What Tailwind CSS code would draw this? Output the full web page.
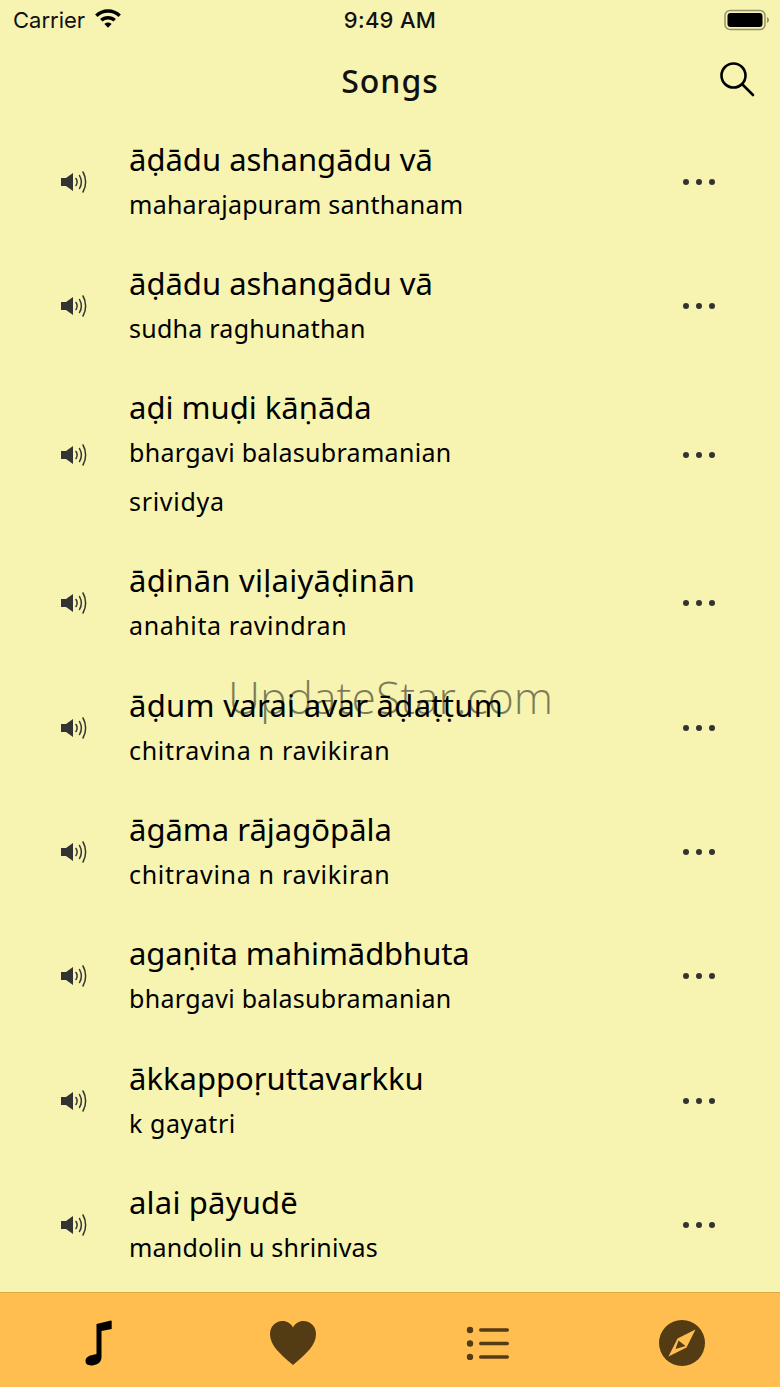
<!DOCTYPE html>
<html lang="en">
  <head>
    <meta charset="UTF-8">
    <meta name="viewport" content="width=device-width, initial-scale=1.0">
    <title>Songs</title>
    <script src="https://cdn.jsdelivr.net/npm/@tailwindcss/browser@4"></script>
  </head>

  <body class="bg-[#f6f4b0]">
    <div class="relative w-[780px] h-[1387px] overflow-hidden flex flex-col bg-[#f6f4b0] text-black font-['Noto_Sans',sans-serif]">

      <!-- status bar -->
      <div class="h-[40px] shrink-0 grid grid-cols-3 items-center px-[13px] font-['Inter',sans-serif]">
        <div class="flex items-center gap-[9px]">
          <span class="text-[22px] text-[#111]">Carrier</span>
          <svg class="w-[28px] h-[21px] -mt-[3px]" viewBox="0 0 30 22"><path d="M15 1C9.600 1 4.800 3.100 1.200 6.600L3.800 9.300C6.700 6.500 10.600 4.800 15 4.800s8.300 1.700 11.200 4.500l2.600-2.700C25.200 3.100 20.400 1 15 1z"/><path d="M15 8.200c-3.300 0-6.300 1.300-8.500 3.400l2.700 2.700c1.500-1.400 3.500-2.300 5.800-2.300s4.300.9 5.800 2.300l2.700-2.700C21.300 9.500 18.300 8.200 15 8.200z"/><path d="M15 15.400c-1.500 0-2.800.6-3.800 1.500l3.800 4 3.800-4c-1-.9-2.300-1.500-3.800-1.500z"/></svg>
        </div>
        <div class="text-center text-[22px] font-medium tracking-[0.3px] text-[#111]">9:49 AM</div>
        <div class="flex justify-end -mr-[3px]">
          <svg class="w-[46px] h-[22px]" viewBox="0 0 46 22"><rect x="1" y="1.500" width="40" height="19" rx="5" fill="none" stroke="#000" stroke-opacity=".4" stroke-width="1.500"/><rect x="3.500" y="4" width="35" height="14" rx="3"/><path d="M43 8v6c1.200-.4 2-1.700 2-3s-.8-2.600-2-3z" fill="#000" fill-opacity=".4"/></svg>
        </div>
      </div>

      <!-- nav bar -->
      <div class="relative h-[79.4px] shrink-0 flex items-center justify-center">
        <h1 class="text-[32px] font-medium tracking-[1px] text-[#111] mt-[2px]">Songs</h1>
        <svg class="absolute right-[25px] top-[21px] w-[36px] h-[36px]" viewBox="0 0 36 36" fill="none" stroke="#000" stroke-width="2.600" stroke-linecap="round"><circle cx="14.500" cy="14.500" r="12"/><path d="M23.500 23.500L34 34"/></svg>
      </div>

      <!-- song rows -->
      <div class="flex-1">
        <div class="flex items-center h-[124.3px]">
          <div class="w-[129px] shrink-0 flex justify-center pl-[19px]"><svg class="w-[28px] h-[26px]" viewBox="0 0 28 26"><path d="M1 9h5l7-5v18l-7-5H1z" fill="#333"/><g fill="none" stroke="#333" stroke-width="1.500" stroke-linecap="round"><path d="M16 9.500c1.300 2 1.300 5 0 7"/><path d="M19.500 6.500c2.300 4 2.300 9 0 13"/><path d="M23 3c3.500 6 3.500 14 0 20"/></g></svg></div>
          <div class="flex-1"><div class="text-[31px] leading-[45px]">āḍādu ashangādu vā</div><div class="text-[25px] leading-[45px] tracking-[0.25px]">maharajapuram santhanam</div></div>
          <div class="w-[100px] flex justify-center gap-[7px] pr-[62px]"><i class="w-[6px] h-[6px] rounded-full bg-[#333]"></i><i class="w-[6px] h-[6px] rounded-full bg-[#333]"></i><i class="w-[6px] h-[6px] rounded-full bg-[#333]"></i></div>
        </div>
        <div class="flex items-center h-[124.3px]">
          <div class="w-[129px] shrink-0 flex justify-center pl-[19px]"><svg class="w-[28px] h-[26px]" viewBox="0 0 28 26"><path d="M1 9h5l7-5v18l-7-5H1z" fill="#333"/><g fill="none" stroke="#333" stroke-width="1.500" stroke-linecap="round"><path d="M16 9.500c1.300 2 1.300 5 0 7"/><path d="M19.500 6.500c2.300 4 2.300 9 0 13"/><path d="M23 3c3.500 6 3.500 14 0 20"/></g></svg></div>
          <div class="flex-1"><div class="text-[31px] leading-[45px]">āḍādu ashangādu vā</div><div class="text-[25px] leading-[45px] tracking-[0.25px]">sudha raghunathan</div></div>
          <div class="w-[100px] flex justify-center gap-[7px] pr-[62px]"><i class="w-[6px] h-[6px] rounded-full bg-[#333]"></i><i class="w-[6px] h-[6px] rounded-full bg-[#333]"></i><i class="w-[6px] h-[6px] rounded-full bg-[#333]"></i></div>
        </div>
        <div class="flex items-center h-[173.3px]">
          <div class="w-[129px] shrink-0 flex justify-center pl-[19px]"><svg class="w-[28px] h-[26px]" viewBox="0 0 28 26"><path d="M1 9h5l7-5v18l-7-5H1z" fill="#333"/><g fill="none" stroke="#333" stroke-width="1.500" stroke-linecap="round"><path d="M16 9.500c1.300 2 1.300 5 0 7"/><path d="M19.500 6.500c2.300 4 2.300 9 0 13"/><path d="M23 3c3.500 6 3.500 14 0 20"/></g></svg></div>
          <div class="flex-1 pt-[3px]"><div class="text-[31px] leading-[45px]">aḍi muḍi kāṇāda</div><div class="text-[25px] leading-[45px] tracking-[0.3px]">bhargavi balasubramanian</div><div class="text-[25px] leading-[53px] tracking-[0.7px]">srividya</div></div>
          <div class="w-[100px] flex justify-center gap-[7px] pr-[62px]"><i class="w-[6px] h-[6px] rounded-full bg-[#333]"></i><i class="w-[6px] h-[6px] rounded-full bg-[#333]"></i><i class="w-[6px] h-[6px] rounded-full bg-[#333]"></i></div>
        </div>
        <div class="flex items-center h-[124.3px]">
          <div class="w-[129px] shrink-0 flex justify-center pl-[19px]"><svg class="w-[28px] h-[26px]" viewBox="0 0 28 26"><path d="M1 9h5l7-5v18l-7-5H1z" fill="#333"/><g fill="none" stroke="#333" stroke-width="1.500" stroke-linecap="round"><path d="M16 9.500c1.300 2 1.300 5 0 7"/><path d="M19.500 6.500c2.300 4 2.300 9 0 13"/><path d="M23 3c3.500 6 3.500 14 0 20"/></g></svg></div>
          <div class="flex-1"><div class="text-[31px] leading-[45px] tracking-[0.26px]">āḍinān viḷaiyāḍinān</div><div class="text-[25px] leading-[45px] tracking-[0.6px]">anahita ravindran</div></div>
          <div class="w-[100px] flex justify-center gap-[7px] pr-[62px]"><i class="w-[6px] h-[6px] rounded-full bg-[#333]"></i><i class="w-[6px] h-[6px] rounded-full bg-[#333]"></i><i class="w-[6px] h-[6px] rounded-full bg-[#333]"></i></div>
        </div>
        <div class="flex items-center h-[124.3px]">
          <div class="w-[129px] shrink-0 flex justify-center pl-[19px]"><svg class="w-[28px] h-[26px]" viewBox="0 0 28 26"><path d="M1 9h5l7-5v18l-7-5H1z" fill="#333"/><g fill="none" stroke="#333" stroke-width="1.500" stroke-linecap="round"><path d="M16 9.500c1.300 2 1.300 5 0 7"/><path d="M19.500 6.500c2.300 4 2.300 9 0 13"/><path d="M23 3c3.500 6 3.500 14 0 20"/></g></svg></div>
          <div class="flex-1"><div class="text-[31px] leading-[45px] tracking-[0.3px]">āḍum varai avar āḍaṭṭum</div><div class="text-[25px] leading-[45px] tracking-[0.7px]">chitravina n ravikiran</div></div>
          <div class="w-[100px] flex justify-center gap-[7px] pr-[62px]"><i class="w-[6px] h-[6px] rounded-full bg-[#333]"></i><i class="w-[6px] h-[6px] rounded-full bg-[#333]"></i><i class="w-[6px] h-[6px] rounded-full bg-[#333]"></i></div>
        </div>
        <div class="flex items-center h-[124.3px]">
          <div class="w-[129px] shrink-0 flex justify-center pl-[19px]"><svg class="w-[28px] h-[26px]" viewBox="0 0 28 26"><path d="M1 9h5l7-5v18l-7-5H1z" fill="#333"/><g fill="none" stroke="#333" stroke-width="1.500" stroke-linecap="round"><path d="M16 9.500c1.300 2 1.300 5 0 7"/><path d="M19.500 6.500c2.300 4 2.300 9 0 13"/><path d="M23 3c3.500 6 3.500 14 0 20"/></g></svg></div>
          <div class="flex-1"><div class="text-[31px] leading-[45px]">āgāma rājagōpāla</div><div class="text-[25px] leading-[45px] tracking-[0.7px]">chitravina n ravikiran</div></div>
          <div class="w-[100px] flex justify-center gap-[7px] pr-[62px]"><i class="w-[6px] h-[6px] rounded-full bg-[#333]"></i><i class="w-[6px] h-[6px] rounded-full bg-[#333]"></i><i class="w-[6px] h-[6px] rounded-full bg-[#333]"></i></div>
        </div>
        <div class="flex items-center h-[124.3px]">
          <div class="w-[129px] shrink-0 flex justify-center pl-[19px]"><svg class="w-[28px] h-[26px]" viewBox="0 0 28 26"><path d="M1 9h5l7-5v18l-7-5H1z" fill="#333"/><g fill="none" stroke="#333" stroke-width="1.500" stroke-linecap="round"><path d="M16 9.500c1.300 2 1.300 5 0 7"/><path d="M19.500 6.500c2.300 4 2.300 9 0 13"/><path d="M23 3c3.500 6 3.500 14 0 20"/></g></svg></div>
          <div class="flex-1"><div class="text-[31px] leading-[45px] tracking-[-0.1px]">agaṇita mahimādbhuta</div><div class="text-[25px] leading-[45px] tracking-[0.3px]">bhargavi balasubramanian</div></div>
          <div class="w-[100px] flex justify-center gap-[7px] pr-[62px]"><i class="w-[6px] h-[6px] rounded-full bg-[#333]"></i><i class="w-[6px] h-[6px] rounded-full bg-[#333]"></i><i class="w-[6px] h-[6px] rounded-full bg-[#333]"></i></div>
        </div>
        <div class="flex items-center h-[124.3px]">
          <div class="w-[129px] shrink-0 flex justify-center pl-[19px]"><svg class="w-[28px] h-[26px]" viewBox="0 0 28 26"><path d="M1 9h5l7-5v18l-7-5H1z" fill="#333"/><g fill="none" stroke="#333" stroke-width="1.500" stroke-linecap="round"><path d="M16 9.500c1.300 2 1.300 5 0 7"/><path d="M19.500 6.500c2.300 4 2.300 9 0 13"/><path d="M23 3c3.500 6 3.500 14 0 20"/></g></svg></div>
          <div class="flex-1"><div class="text-[31px] leading-[45px]">ākkappoṛuttavarkku</div><div class="text-[25px] leading-[45px] tracking-[0.55px]">k gayatri</div></div>
          <div class="w-[100px] flex justify-center gap-[7px] pr-[62px]"><i class="w-[6px] h-[6px] rounded-full bg-[#333]"></i><i class="w-[6px] h-[6px] rounded-full bg-[#333]"></i><i class="w-[6px] h-[6px] rounded-full bg-[#333]"></i></div>
        </div>
        <div class="flex items-center h-[124.3px]">
          <div class="w-[129px] shrink-0 flex justify-center pl-[19px]"><svg class="w-[28px] h-[26px]" viewBox="0 0 28 26"><path d="M1 9h5l7-5v18l-7-5H1z" fill="#333"/><g fill="none" stroke="#333" stroke-width="1.500" stroke-linecap="round"><path d="M16 9.500c1.300 2 1.300 5 0 7"/><path d="M19.500 6.500c2.300 4 2.300 9 0 13"/><path d="M23 3c3.500 6 3.500 14 0 20"/></g></svg></div>
          <div class="flex-1"><div class="text-[31px] leading-[45px] tracking-[0.2px]">alai pāyudē</div><div class="text-[25px] leading-[45px] tracking-[0.2px]">mandolin u shrinivas</div></div>
          <div class="w-[100px] flex justify-center gap-[7px] pr-[62px]"><i class="w-[6px] h-[6px] rounded-full bg-[#333]"></i><i class="w-[6px] h-[6px] rounded-full bg-[#333]"></i><i class="w-[6px] h-[6px] rounded-full bg-[#333]"></i></div>
        </div>
      </div>

      <!-- tab bar -->
      <div class="h-[95px] shrink-0 grid grid-cols-4 border-t border-[#e0a93f] bg-[#ffbe4f] pt-[6px]">
        <div class="flex items-center justify-center">
          <svg class="w-[32px] h-[48px]" viewBox="0 0 32 48"><path d="M14.500 5L29 1.500c.4 0 .7.3.7.7V10L19.500 12V38c0 4.500-3 7.500-8 8.200C6 47 3.500 45 3.500 42c0-3 2.500-5 6-5.800l5-1.200z"/></svg>
        </div>
        <div class="flex items-center justify-center">
          <svg class="w-[48px] h-[46px]" viewBox="0 0 48 46"><path d="M24 45C10 33 1 25 1 14 1 6.500 6.500 1 13.500 1 18 1 22 3.500 24 7.500 26 3.500 30 1 34.500 1 41.500 1 47 6.500 47 14c0 11-9 19-23 31z" fill="#533b14"/></svg>
        </div>
        <div class="flex items-center justify-center">
          <svg class="w-[44px] h-[34px]" viewBox="0 0 44 34" fill="#533b14"><circle cx="4" cy="4" r="3.200"/><circle cx="4" cy="17.500" r="3.200"/><circle cx="4" cy="31" r="3.200"/><rect x="13" y="2.300" width="30" height="3.400" rx="1.700"/><rect x="13" y="15.800" width="30" height="3.400" rx="1.700"/><rect x="13" y="29.300" width="30" height="3.400" rx="1.700"/></svg>
        </div>
        <div class="flex items-center justify-center">
          <svg class="w-[46px] h-[46px] -ml-[1px]" viewBox="0 0 46 46"><circle cx="23" cy="23" r="23" fill="#533b14"/><path d="M36.500 9.500L27.500 27.500 9.500 36.500 18.500 18.500z" fill="#ffbe4f"/><path d="M19.500 20.500L16.500 29 26.500 26z" fill="#533b14"/></svg>
        </div>
      </div>

      <!-- watermark -->
      <div class="absolute left-[228px] top-[666px] text-[44.5px] leading-[62px] font-light text-black/50 font-['Open_Sans',sans-serif]">UpdateStar.com</div>
    </div>
  </body>
</html>
